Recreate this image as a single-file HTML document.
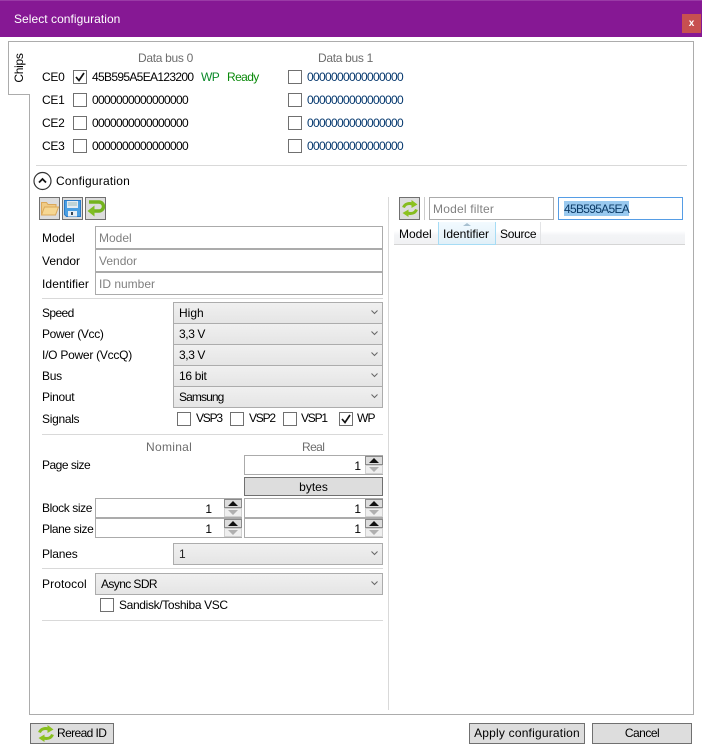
<!DOCTYPE html>
<html><head><meta charset="utf-8"><style>
html,body{margin:0;padding:0;width:702px;height:752px;overflow:hidden;background:#fff}
body{position:relative;font:12px/16px "Liberation Sans",sans-serif;color:#000}
div,svg{position:absolute;box-sizing:border-box}
.t{height:16px;white-space:nowrap}
.g{color:#6d6d6d}
.d{letter-spacing:-.67px}
.b{color:#05386e}
.cb{width:14px;height:14px;border:1px solid #707070;background:#fff}
.i{border:1px solid #ababab;background:#fff;height:23px;line-height:23px;padding-left:3px;color:#808080;white-space:nowrap}
.c{border:1px solid #acacac;background:linear-gradient(#f0f0f0,#e5e5e5);height:22px;line-height:20px;padding-left:5px;white-space:nowrap}
.s{background:#d9d9d9;height:1px}
.btn{border:1px solid #707070;background:#ddd;text-align:center;white-space:nowrap}
.sp{border:1px solid #ababab;background:#fff;height:20px;line-height:20px;text-align:right;white-space:nowrap}
</style></head><body>
<div style="left:0;top:0;width:702px;height:37px;background:#861894;border-top:1px solid #9a3aa6"></div>
<div class="t" style="left:14px;top:11px;color:#fff;letter-spacing:.05px">Select configuration</div>
<div style="left:682px;top:14px;width:19px;height:19px;background:#c75050;color:#fff;font-weight:bold;font-size:10px;line-height:19px;text-align:center">x</div>

<div style="left:29px;top:41px;width:665px;height:674px;border:1px solid #acacac;background:#fff"></div>
<div style="left:8px;top:41px;width:22px;height:54px;border:1px solid #acacac;border-right:0;background:#fff"></div>
<div style="left:29px;top:42px;width:2px;height:52px;background:#fff"></div>
<div class="t" style="left:-1px;top:60px;width:40px;text-align:center;transform:rotate(-90deg);letter-spacing:-.3px">Chips</div>

<div class="t g" style="left:138px;top:50px;letter-spacing:-.3px">Data bus 0</div>
<div class="t g" style="left:318px;top:50px;letter-spacing:-.3px">Data bus 1</div>
<div class="t" style="left:42px;top:69px;letter-spacing:-.3px">CE0</div>
<div class="t" style="left:42px;top:92px;letter-spacing:-.3px">CE1</div>
<div class="t" style="left:42px;top:115px;letter-spacing:-.3px">CE2</div>
<div class="t" style="left:42px;top:138px;letter-spacing:-.3px">CE3</div>
<div class="cb" style="left:73px;top:70px"></div>
<svg style="left:73px;top:70px" width="14" height="14"><path d="M3 7l3 3.500L11 3" fill="none" stroke="#111" stroke-width="1.700"/></svg>
<div class="cb" style="left:73px;top:93px"></div>
<div class="cb" style="left:73px;top:116px"></div>
<div class="cb" style="left:73px;top:139px"></div>
<div class="cb" style="left:288px;top:70px"></div>
<div class="cb" style="left:288px;top:93px"></div>
<div class="cb" style="left:288px;top:116px"></div>
<div class="cb" style="left:288px;top:139px"></div>
<div class="t d" style="left:92px;top:69px">45B595A5EA123200</div>
<div class="t" style="left:201px;top:69px;color:#0b8a2a;letter-spacing:-.6px">WP</div>
<div class="t" style="left:227px;top:69px;color:#0b8a0b;letter-spacing:-.6px">Ready</div>
<div class="t d" style="left:92px;top:92px">0000000000000000</div>
<div class="t d" style="left:92px;top:115px">0000000000000000</div>
<div class="t d" style="left:92px;top:138px">0000000000000000</div>
<div class="t d b" style="left:307px;top:69px">0000000000000000</div>
<div class="t d b" style="left:307px;top:92px">0000000000000000</div>
<div class="t d b" style="left:307px;top:115px">0000000000000000</div>
<div class="t d b" style="left:307px;top:138px">0000000000000000</div>

<div class="s" style="left:36px;top:165px;width:651px"></div>
<svg style="left:33px;top:171px" width="20" height="20"><circle cx="9.500" cy="10" r="8.500" fill="#fff" stroke="#333" stroke-width="1.200"/><path d="M6 11.500l3.500-3.500 3.500 3.500" fill="none" stroke="#111" stroke-width="1.800"/></svg>
<div class="t" style="left:56px;top:173px;letter-spacing:.2px">Configuration</div>

<div class="btn" style="left:39px;top:197px;width:21px;height:23px"></div>
<svg style="left:39px;top:197px" width="21" height="23"><path d="M2.500 18V5.500h5l1.500 2h8v3" fill="#f0cb85" stroke="#dba85a"/><path d="M2.500 18l3-8h14l-3 8z" fill="#f6d793" stroke="#dba85a"/></svg>
<div class="btn" style="left:62px;top:197px;width:21px;height:23px"></div>
<svg style="left:62px;top:197px" width="21" height="23"><path d="M2.500 3.500h16v16h-14l-2-2z" fill="#4a9fe2" stroke="#2a7bc8"/><rect x="5" y="4" width="11" height="7" fill="#e3ebf2"/><path d="M6 6h9M6 8h9" stroke="#9bb"/><rect x="6" y="14" width="9" height="5.500" fill="#e8eef4"/><rect x="9" y="15" width="2" height="3" fill="#345"/></svg>
<div class="btn" style="left:85px;top:197px;width:21px;height:23px"></div>
<svg style="left:85px;top:197px" width="21" height="23"><path d="M4 5h10a4.200 4.200 0 0 1 0 9H8" fill="none" stroke="#74b31e" stroke-width="3.400"/><path d="M9.500 8.500L2.500 14l7 5.500z" fill="#7fbd24"/></svg>

<div class="t" style="left:42px;top:230px">Model</div>
<div class="t" style="left:42px;top:253px">Vendor</div>
<div class="t" style="left:42px;top:276px;letter-spacing:.1px">Identifier</div>
<div class="i" style="left:95px;top:226px;width:288px">Model</div>
<div class="i" style="left:95px;top:249px;width:288px">Vendor</div>
<div class="i" style="left:95px;top:272px;width:288px">ID number</div>
<div class="s" style="left:42px;top:298px;width:341px"></div>

<div class="t" style="left:42px;top:305px;letter-spacing:-.6px">Speed</div>
<div class="t" style="left:42px;top:326px;letter-spacing:-.35px">Power (Vcc)</div>
<div class="t" style="left:42px;top:347px;letter-spacing:-.25px">I/O Power (VccQ)</div>
<div class="t" style="left:42px;top:368px;letter-spacing:-.3px">Bus</div>
<div class="t" style="left:42px;top:389px;letter-spacing:-.3px">Pinout</div>
<div class="t" style="left:42px;top:411px;letter-spacing:-.3px">Signals</div>
<div class="c" style="left:173px;top:302px;width:210px">High</div>
<div class="c" style="left:173px;top:323px;width:210px;letter-spacing:-.4px">3,3 V</div>
<div class="c" style="left:173px;top:344px;width:210px;letter-spacing:-.4px">3,3 V</div>
<div class="c" style="left:173px;top:365px;width:210px;letter-spacing:-.3px">16 bit</div>
<div class="c" style="left:173px;top:386px;width:210px;letter-spacing:-.9px">Samsung</div>
<svg style="left:370px;top:302px" width="10" height="110" fill="none" stroke="#666"><path d="M1.500 8.500l3 3 3-3M1.500 29.500l3 3 3-3M1.500 50.500l3 3 3-3M1.500 71.500l3 3 3-3M1.500 92.500l3 3 3-3"/></svg>

<div class="cb" style="left:177px;top:412px"></div>
<div class="cb" style="left:230px;top:412px"></div>
<div class="cb" style="left:283px;top:412px"></div>
<div class="cb" style="left:339px;top:412px"></div>
<svg style="left:339px;top:412px" width="14" height="14"><path d="M3 7l3 3.500L11 3" fill="none" stroke="#111" stroke-width="1.700"/></svg>
<div class="t" style="left:196px;top:410px;letter-spacing:-1.200px">VSP3</div>
<div class="t" style="left:249px;top:410px;letter-spacing:-1.200px">VSP2</div>
<div class="t" style="left:301px;top:410px;letter-spacing:-1.200px">VSP1</div>
<div class="t" style="left:357px;top:410px;letter-spacing:-.8px">WP</div>

<div class="s" style="left:42px;top:434px;width:341px"></div>
<div class="t g" style="left:146px;top:439px;letter-spacing:.3px">Nominal</div>
<div class="t g" style="left:302px;top:439px;letter-spacing:-.6px">Real</div>
<div class="t" style="left:42px;top:457px;letter-spacing:-.5px">Page size</div>
<div class="t" style="left:42px;top:500px;letter-spacing:-.4px">Block size</div>
<div class="t" style="left:42px;top:521px;letter-spacing:-.4px">Plane size</div>
<div class="t" style="left:42px;top:546px;letter-spacing:-.2px">Planes</div>

<div class="sp" style="left:244px;top:455px;width:139px;padding-right:21px">1</div>
<div class="btn" style="left:244px;top:477px;width:139px;height:19px;line-height:18px">bytes</div>
<div class="sp" style="left:95px;top:498px;width:147px;padding-right:29px">1</div>
<div class="sp" style="left:244px;top:498px;width:139px;padding-right:21px">1</div>
<div class="sp" style="left:95px;top:518px;width:147px;padding-right:29px">1</div>
<div class="sp" style="left:244px;top:518px;width:139px;padding-right:21px">1</div>
<svg style="left:222px;top:455px" width="162" height="84">
<path fill="#dcdcdc" stroke="#8a8a8a" d="M143.500 1.500h17v8h-17zM143.500 44.500h17v8h-17zM143.500 64.500h17v8h-17zM2.500 44.500h17v8h-17zM2.500 64.500h17v8h-17z"/>
<path fill="#efefef" stroke="#d0d0d0" d="M143.500 10.500h17v8h-17zM143.500 53.500h17v8h-17zM143.500 73.500h17v8h-17zM2.500 53.500h17v8h-17zM2.500 73.500h17v8h-17z"/>
<path fill="#111" d="M152 3l-5 5h10zM152 46l-5 5h10zM152 66l-5 5h10zM11 46l-5 5h10zM11 66l-5 5h10z"/>
<path fill="#b0b0b0" d="M152 17l-5-5h10zM152 60l-5-5h10zM152 80l-5-5h10zM11 60l-5-5h10zM11 80l-5-5h10z"/>
</svg>

<div class="c" style="left:173px;top:543px;width:210px;color:#222">1</div>
<svg style="left:370px;top:543px" width="10" height="22" fill="none" stroke="#666"><path d="M1.500 8.500l3 3 3-3"/></svg>
<div class="s" style="left:42px;top:568px;width:341px"></div>
<div class="t" style="left:42px;top:576px;letter-spacing:.1px">Protocol</div>
<div class="c" style="left:95px;top:573px;width:288px;letter-spacing:-.6px">Async SDR</div>
<svg style="left:370px;top:573px" width="10" height="22" fill="none" stroke="#666"><path d="M1.500 8.500l3 3 3-3"/></svg>
<div class="cb" style="left:100px;top:598px"></div>
<div class="t" style="left:119px;top:597px;letter-spacing:-.35px">Sandisk/Toshiba VSC</div>
<div class="s" style="left:42px;top:620px;width:341px"></div>

<div class="s" style="left:388px;top:197px;width:1px;height:513px"></div>
<div class="btn" style="left:399px;top:197px;width:21px;height:23px"></div>
<svg style="left:401px;top:199px" width="18" height="19"><path d="M2.500 8.500C4 4.500 8 4 11.500 5" fill="none" stroke="#86bd1e" stroke-width="3"/><path d="M10.500 1l6 4.500-6 3.500z" fill="#8cc21f"/><path d="M15.500 10.500C14 14.500 10 15 6.500 14" fill="none" stroke="#86bd1e" stroke-width="3"/><path d="M7.500 10.500l-6 3.500 6 4z" fill="#8cc21f"/></svg>
<div style="left:424px;top:197px;width:1px;height:23px;background:#ccc"></div>
<div class="i" style="left:429px;top:197px;width:125px;padding-left:3px;letter-spacing:.2px">Model filter</div>
<div class="i" style="left:558px;top:197px;width:125px;border-color:#569de5"></div>
<div style="left:564px;top:201px;width:65px;height:15px;background:#99c9ef"></div>
<div class="t" style="left:564px;top:201px;color:#0b3a66;letter-spacing:-.7px">45B595A5EA</div>

<div style="left:394px;top:222px;width:291px;height:23px;background:linear-gradient(#fff 0,#fff 40%,#f3f4f6 60%,#f1f2f4 100%);border-bottom:1px solid #d5d5d5"></div>
<div style="left:438px;top:222px;width:58px;height:23px;background:linear-gradient(#f2faff,#e1f0f8);border:1px solid #a6dcf5;border-top:0"></div>
<div style="left:540px;top:222px;width:1px;height:22px;background:#e3e4e6"></div>
<svg style="left:460px;top:222px" width="14" height="6"><path d="M7 1l-4 3h8z" fill="#a8c0d0"/></svg>
<div class="t" style="left:399px;top:226px">Model</div>
<div class="t" style="left:443px;top:226px">Identifier</div>
<div class="t" style="left:500px;top:226px;letter-spacing:-.3px">Source</div>

<div class="btn" style="left:30px;top:723px;width:84px;height:21px;text-align:left;padding-left:26px;line-height:19px;letter-spacing:-.6px">Reread ID</div>
<svg style="left:37px;top:724px" width="18" height="19"><path d="M2.500 8.500C4 4.500 8 4 11.500 5" fill="none" stroke="#86bd1e" stroke-width="3"/><path d="M10.500 1l6 4.500-6 3.500z" fill="#8cc21f"/><path d="M15.500 10.500C14 14.500 10 15 6.500 14" fill="none" stroke="#86bd1e" stroke-width="3"/><path d="M7.500 10.500l-6 3.500 6 4z" fill="#8cc21f"/></svg>
<div class="btn" style="left:469px;top:723px;width:116px;height:21px;line-height:19px;letter-spacing:.2px">Apply configuration</div>
<div class="btn" style="left:592px;top:723px;width:100px;height:21px;line-height:19px;letter-spacing:-.5px">Cancel</div>
</body></html>
